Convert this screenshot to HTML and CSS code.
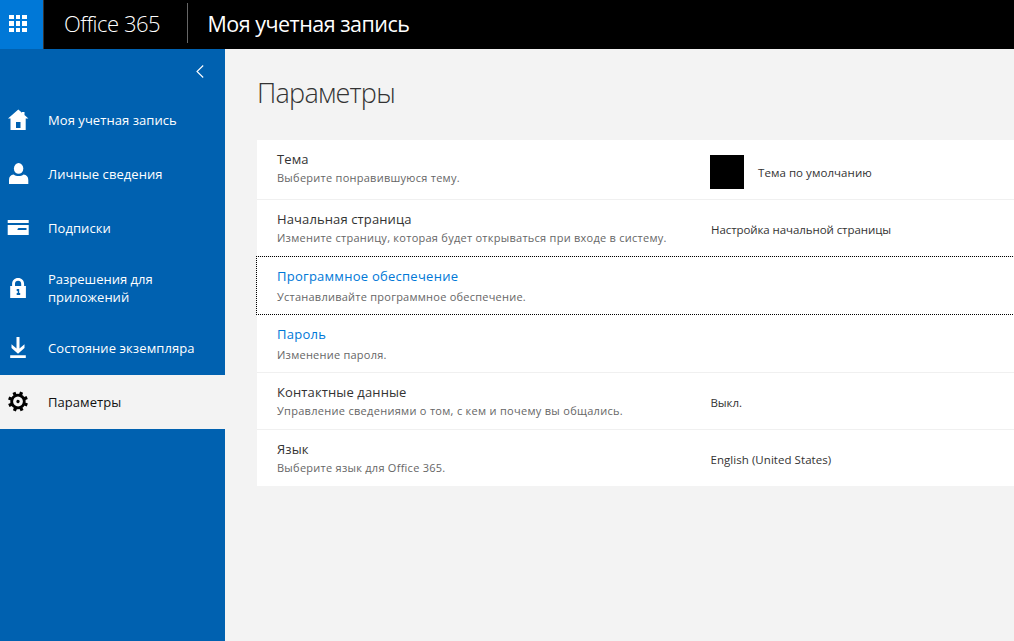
FILE: index.html
```html
<!DOCTYPE html>
<html lang="ru">
<head>
<meta charset="utf-8">
<title>Office 365</title>
<link rel="stylesheet" href="styles.css">
</head>
<body>
<header class="topbar">
  <button class="launcher" aria-label="Приложения">
    <svg width="18" height="17" viewBox="0 0 18 17" fill="#fff" shape-rendering="crispEdges"><path d="M0 0h5v4H0zM7 0h4v4H7zM13 0h5v4h-5zM0 6h5v5H0zM7 6h4v5H7zM13 6h5v5h-5zM0 13h5v4H0zM7 13h4v4H7zM13 13h5v4h-5z"/></svg>
  </button>
  <span class="brand">Office 365</span>
  <span class="area">Моя учетная запись</span>
</header>
<div class="layout">
  <nav class="sidebar">
    <div class="collapse"><svg width="8" height="13" viewBox="0 0 8 13" fill="none" stroke="#fff" stroke-width="1.1"><path d="M7.200.5 1 6.500l6.200 6"/></svg></div>
    <a class="item account"><svg class="icon" viewBox="0 0 22 22" fill="#fff"><path fill-rule="evenodd" d="M11.300.4 15 3.700V3h2.500v3l3.900 3.400h-2.700V21H3.500V9.400H1zM9 13v6h4.500v-6z"/></svg><span>Моя учетная запись</span></a>
    <a class="item person"><svg class="icon" viewBox="0 0 22 22" fill="#fff"><ellipse cx="11.600" cy="5.400" rx="4.700" ry="5.300"/><path d="M2 21v-4c0-3.300 1.600-5 4.700-5.500 2.400 2 7.400 2 9.800 0 3.100.5 4.800 2.200 4.800 5.500v4z"/></svg><span>Личные сведения</span></a>
    <a class="item subs"><svg class="icon" viewBox="0 0 22 22" fill="#fff"><path fill-rule="evenodd" d="M.7 3h21v3h-21zM.7 8h21v10h-21zM10.500 12v1h9v-2h-8z"/></svg><span>Подписки</span></a>
    <a class="item tall perms"><svg class="icon" viewBox="0 0 22 22" fill="#fff"><path fill-rule="evenodd" d="M3.200 9h1.900V7c0-3.600 2.500-6 6-6s6 2.400 6 6v2h1.800v12H3.200zM8 9h6.200V7c0-2-1.200-3.200-3.100-3.200S8 5 8 7zM9.700 12v2h1v2h-1v2h3.500v-2h-1v-4z"/></svg><span>Разрешения для<br>приложений</span></a>
    <a class="item state"><svg class="icon" viewBox="0 0 22 22" fill="#fff"><path d="M9.500 0h3v11.500l5-4.300v3.700L11 16.800 4.500 10.900V7.200l5 4.300zM3.200 18.200h15.600V21H3.200z"/></svg><span>Состояние экземпляра</span></a>
    <a class="item active"><svg class="icon" viewBox="0 0 22 22"><g transform="translate(0 -.5) rotate(21 11 11)"><path d="M9.400 1h3.200v20H9.400z"/><path d="M9.400 1h3.200v20H9.400z" transform="rotate(45 11 11)"/><path d="M9.400 1h3.200v20H9.400z" transform="rotate(90 11 11)"/><path d="M9.400 1h3.200v20H9.400z" transform="rotate(135 11 11)"/><circle cx="11" cy="11" r="7.700"/><circle cx="11" cy="11" r="4.900" fill="#f3f3f3"/><circle cx="11" cy="11" r="1.700"/></g></svg><span>Параметры</span></a>
  </nav>
  <main class="content">
    <h1>Параметры</h1>
    <div class="panel">
      <section class="row theme"><div class="info"><h2>Тема</h2><p>Выберите понравившуюся тему.</p></div><div class="value"><i class="swatch"></i><span>Тема по умолчанию</span></div></section>
      <section class="row start"><div class="info"><h2>Начальная страница</h2><p>Измените страницу, которая будет открываться при входе в систему.</p></div><div class="value"><span>Настройка начальной страницы</span></div></section>
      <section class="row link focused"><div class="info"><h2>Программное обеспечение</h2><p>Устанавливайте программное обеспечение.</p></div></section>
      <section class="row link password"><div class="info"><h2>Пароль</h2><p>Изменение пароля.</p></div></section>
      <section class="row contacts"><div class="info"><h2>Контактные данные</h2><p>Управление сведениями о том, с кем и почему вы общались.</p></div><div class="value"><span>Выкл.</span></div></section>
      <section class="row language"><div class="info"><h2>Язык</h2><p>Выберите язык для Office 365.</p></div><div class="value"><span>English (United States)</span></div></section>
    </div>
  </main>
</div>
</body>
</html>
```
FILE: styles.css
```css
* { box-sizing: border-box; }
body { margin: 0; height: 641px; overflow: hidden; background: #f3f3f3; color: #333; font-family: "Open Sans", "Noto Sans", sans-serif; font-size: 12px; }
h1, h2, p { margin: 0; font-weight: 400; white-space: nowrap; }
.topbar { display: flex; height: 49px; background: #000; color: #fff; }
.launcher { width: 44px; padding: 0 8px 3px 0; border: 0; border-right: 1px solid #333; background: #0078d7; display: flex; align-items: center; justify-content: center; }
.brand, .area { white-space: nowrap; line-height: 48px; font-size: 22px; }
.brand { width: 144px; height: 40px; margin-top: 3px; padding-left: 20px; border-right: 1px solid #666; line-height: 41px; font-weight: 350; letter-spacing: -.48px; }
.area { padding-left: 19.500px; font-size: 21.500px; letter-spacing: -.51px; }
.layout { display: flex; height: 592px; }
.sidebar { width: 225px; background: #0061b0; color: #fff; }
.collapse { height: 44px; display: flex; justify-content: flex-end; padding: 16px 21px 0 0; }
.item { display: flex; align-items: center; height: 54px; padding-left: 7px; font-size: 13px; line-height: 18px; letter-spacing: .06px; white-space: nowrap; }
.item.tall { height: 66px; letter-spacing: 0; }
.state { letter-spacing: .1px; }
.icon { width: 22px; height: 22px; margin-right: 19px; flex: none; }
.active { background: #f3f3f3; color: #111; }
.content { flex: 1; padding: 24px 0 0 32px; }
h1 { height: 67px; line-height: 40px; font-size: 27px; font-weight: 300; letter-spacing: -.75px; }
.panel { background: #fff; }
.row { display: grid; grid-template-columns: 453px 1fr; height: 58px; border-bottom: 1px solid #f0f0f0; }
.info { padding: 9px 0 0 20px; }
h2 { font-size: 13px; line-height: 20px; letter-spacing: .12px; }
p { font-size: 11px; line-height: 18px; letter-spacing: .26px; color: #666; }
.value { display: flex; align-items: center; padding: 3px 0 0; font-size: 11.500px; white-space: nowrap; }
.theme { height: 60px; }
.theme .value { padding: 5px 0 0; letter-spacing: .06px; }
.swatch { width: 34px; height: 34px; margin-right: 14px; background: #000; }
.start, .contacts { height: 57px; }
.start .value { padding-left: 1px; letter-spacing: -.08px; }
.contacts .value { padding-left: .5px; letter-spacing: -.1px; }
.contacts p { letter-spacing: .29px; }
.link h2 { color: #0078d7; letter-spacing: .26px; }
.link p { margin-top: 2px; letter-spacing: .24px; }
.focused { outline: 1px dotted #000; height: 57px; margin-bottom: 1px; border: 0; }
.language { height: 56px; border: 0; }
.language .value { padding: 2px 0 0 .5px; letter-spacing: .05px; }
```
